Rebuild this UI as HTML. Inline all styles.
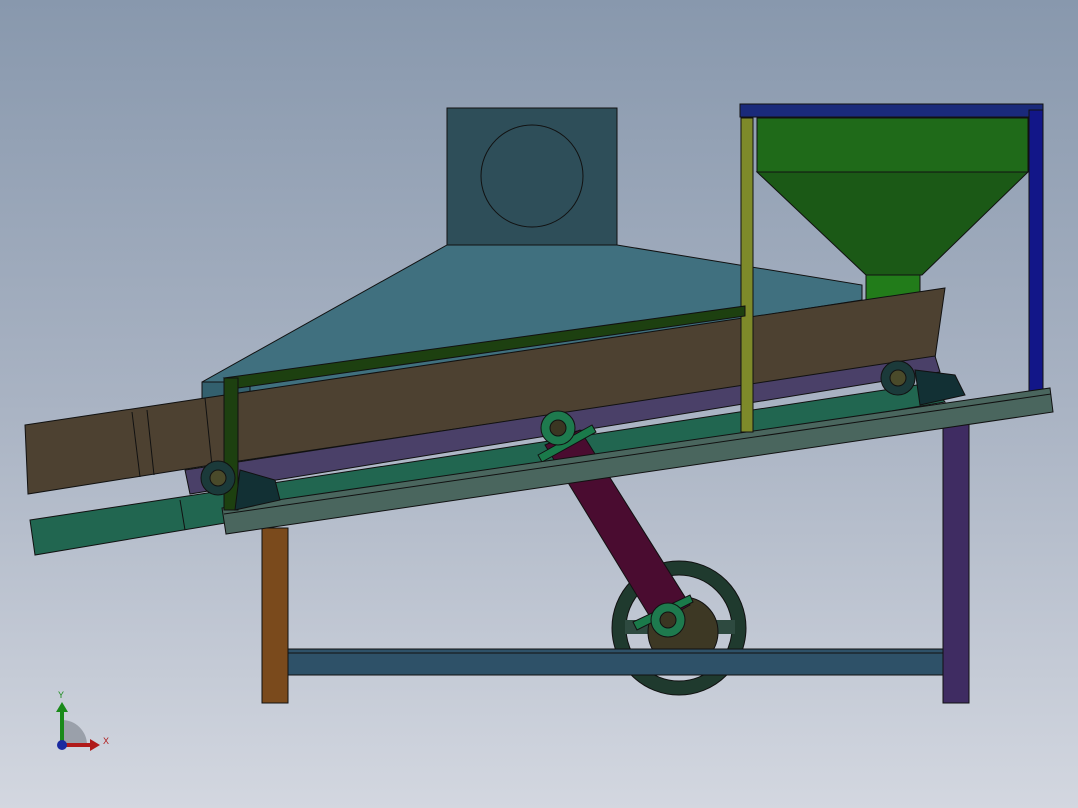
<!DOCTYPE html>
<html><head><meta charset="utf-8"><style>
html,body{margin:0;padding:0;width:1078px;height:808px;overflow:hidden}
body{background:linear-gradient(#8898ad 0%,#a9b3c3 50%,#d3d7e0 100%);font-family:"Liberation Sans",sans-serif}
svg{position:absolute;left:0;top:0}
</style></head><body>
<svg width="1078" height="808" viewBox="0 0 1078 808" stroke="#111" stroke-width="1">
<!-- fan box -->
<rect x="447" y="108" width="170" height="138" fill="#2e4e59"/>
<circle cx="532" cy="176" r="51" fill="#2e4e59"/>
<!-- hood -->
<polygon points="447,245 617,245 862,285 862,300 202,402 202,382" fill="#40707f"/>
<polygon points="202,382 250,382 250,395 202,402" fill="#33606e"/>
<!-- hopper -->
<rect x="757" y="118" width="271" height="54" fill="#1f6a19"/>
<polygon points="757,172 1028,172 922,275 866,275" fill="#1b5916"/>
<rect x="866" y="275" width="54" height="25" fill="#227c1a"/>
<!-- blue frame -->
<rect x="740" y="104" width="303" height="13" fill="#1a2a7a"/>
<rect x="1029" y="110" width="14" height="282" fill="#121688"/>
<!-- purple leg right -->
<rect x="943" y="420" width="26" height="283" fill="#3f2c62"/>
<!-- orange leg -->
<rect x="262" y="528" width="26" height="175" fill="#7a4a1c"/>
<!-- wheel -->
<circle cx="679" cy="628" r="60" fill="none" stroke="#1f3a2e" stroke-width="14"/>
<circle cx="679" cy="628" r="67" fill="none"/>
<circle cx="679" cy="628" r="53" fill="none"/>
<rect x="625" y="620" width="110" height="14" fill="#2e4a40" stroke="none"/>
<circle cx="683" cy="632" r="35" fill="#3d3824"/>
<!-- bottom bar -->
<rect x="288" y="649" width="655" height="26" fill="#2e5168"/>
<line x1="288" y1="653" x2="943" y2="653"/>
<!-- brown trough -->
<polygon points="25,425 205,398 945,288 935,358 205,466 28,494" fill="#4d4131"/>
<line x1="132" y1="412" x2="140" y2="477"/><line x1="147" y1="410" x2="154" y2="475"/>
<line x1="205" y1="398" x2="212" y2="466"/>
<!-- purple channel -->
<polygon points="185,470 935,356 940,372 190,494" fill="#4a4068"/>
<!-- green lower channel -->
<polygon points="30,520 930,383 945,402 35,555" fill="#216650"/>
<line x1="180" y1="500" x2="185" y2="530"/>
<!-- connecting rod -->
<polygon points="545,445 580,430 690,605 655,625" fill="#4a0c30"/>
<polygon points="538,455 592,425 596,432 542,462" fill="#1a7a4a"/>
<polygon points="633,622 690,595 693,602 637,630" fill="#1a7a4a"/>
<!-- beam -->
<polygon points="222,508 1050,388 1053,412 226,534" fill="#4a665e"/>
<line x1="224" y1="514" x2="1051" y2="394"/>
<!-- olive post -->
<rect x="741" y="118" width="12" height="314" fill="#7e8a2a"/>
<!-- green frame -->
<polygon points="224,378 745,306 745,316 238,388" fill="#1d4010"/>
<rect x="224" y="378" width="14" height="132" fill="#1d4010"/>
<!-- bearings -->
<g fill="#1e7a4e"><circle cx="558" cy="428" r="17"/><circle cx="668" cy="620" r="17"/></g>
<g fill="#3a3622"><circle cx="558" cy="428" r="8"/><circle cx="668" cy="620" r="8"/></g>
<g fill="#1b3a3a"><circle cx="218" cy="478" r="17"/><circle cx="898" cy="378" r="17"/></g>
<g fill="#4a4a2a"><circle cx="218" cy="478" r="8"/><circle cx="898" cy="378" r="8"/></g>
<polygon points="240,470 275,480 280,500 235,510" fill="#123034"/>
<polygon points="915,370 955,375 965,395 920,405" fill="#123034"/>
<!-- triad -->
<g stroke="none">
<path d="M62,745 L62,720 A25,25 0 0 1 87,745 Z" fill="#9aa0aa"/>
<rect x="60" y="708" width="4" height="37" fill="#1a8a1a"/>
<polygon points="56,712 62,702 68,712" fill="#1a8a1a"/>
<rect x="62" y="743" width="30" height="4" fill="#b01a1a"/>
<polygon points="90,739 100,745 90,751" fill="#b01a1a"/>
<circle cx="62" cy="745" r="5" fill="#1a2aa0"/>
</g>
<text x="58" y="698" font-size="9" fill="#1a8a1a" stroke="none">Y</text>
<text x="103" y="744" font-size="9" fill="#b01a1a" stroke="none">X</text>
</svg>
</body></html>
